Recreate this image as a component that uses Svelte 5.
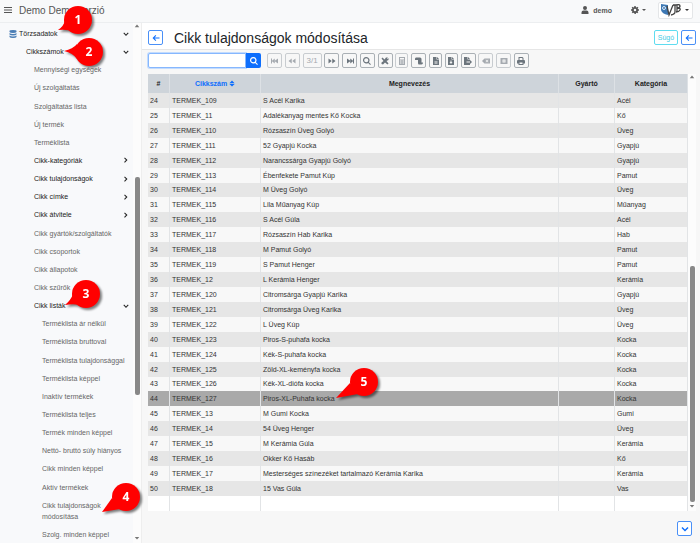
<script>
  const menu = [
    { t: 'Törzsadatok', lvl: 0, open: true },
    { t: 'Cikkszámok', lvl: 1, open: true },
    { t: 'Mennyiségi egységek', lvl: 2 },
    { t: 'Új szolgáltatás', lvl: 2 },
    { t: 'Szolgáltatás lista', lvl: 2 },
    { t: 'Új termék', lvl: 2 },
    { t: 'Terméklista', lvl: 2 },
    { t: 'Cikk-kategóriák', lvl: 2, open: false },
    { t: 'Cikk tulajdonságok', lvl: 2, open: false },
    { t: 'Cikk címke', lvl: 2, open: false },
    { t: 'Cikk átvitele', lvl: 2, open: false },
    { t: 'Cikk gyártók/szolgáltatók', lvl: 2 },
    { t: 'Cikk csoportok', lvl: 2 },
    { t: 'Cikk állapotok', lvl: 2 },
    { t: 'Cikk szűrők', lvl: 2 },
    { t: 'Cikk listák', lvl: 2, open: true },
    { t: 'Terméklista ár nélkül', lvl: 3 },
    { t: 'Terméklista bruttoval', lvl: 3 },
    { t: 'Terméklista tulajdonsággal', lvl: 3 },
    { t: 'Terméklista képpel', lvl: 3 },
    { t: 'Inaktív termékek', lvl: 3 },
    { t: 'Terméklista teljes', lvl: 3 },
    { t: 'Termék minden képpel', lvl: 3 },
    { t: 'Nettó- bruttó súly hiányos', lvl: 3 },
    { t: 'Cikk minden képpel', lvl: 3 },
    { t: 'Aktív termékek', lvl: 3 },
    { t: 'Cikk tulajdonságok módosítása', lvl: 3 },
    { t: 'Szolg. minden képpel', lvl: 3 },
  ]

  const rows = [
    [24, 'TERMEK_109', 'S Acél Karika', 'Acél'],
    [25, 'TERMEK_11', 'Adalékanyag mentes Kő Kocka', 'Kő'],
    [26, 'TERMEK_110', 'Rózsaszín Üveg Golyó', 'Üveg'],
    [27, 'TERMEK_111', '52 Gyapjú Kocka', 'Gyapjú'],
    [28, 'TERMEK_112', 'Narancssárga Gyapjú Golyó', 'Gyapjú'],
    [29, 'TERMEK_113', 'Ébenfekete Pamut Kúp', 'Pamut'],
    [30, 'TERMEK_114', 'M Üveg Golyó', 'Üveg'],
    [31, 'TERMEK_115', 'Lila Műanyag Kúp', 'Műanyag'],
    [32, 'TERMEK_116', 'S Acél Gúla', 'Acél'],
    [33, 'TERMEK_117', 'Rózsaszín Hab Karika', 'Hab'],
    [34, 'TERMEK_118', 'M Pamut Golyó', 'Pamut'],
    [35, 'TERMEK_119', 'S Pamut Henger', 'Pamut'],
    [36, 'TERMEK_12', 'L Kerámia Henger', 'Kerámia'],
    [37, 'TERMEK_120', 'Citromsárga Gyapjú Karika', 'Gyapjú'],
    [38, 'TERMEK_121', 'Citromsárga Üveg Karika', 'Üveg'],
    [39, 'TERMEK_122', 'L Üveg Kúp', 'Üveg'],
    [40, 'TERMEK_123', 'Piros-S-puhafa kocka', 'Kocka'],
    [41, 'TERMEK_124', 'Kék-S-puhafa kocka', 'Kocka'],
    [42, 'TERMEK_125', 'Zöld-XL-keményfa kocka', 'Kocka'],
    [43, 'TERMEK_126', 'Kék-XL-diófa kocka', 'Kocka'],
    [44, 'TERMEK_127', 'Piros-XL-Puhafa kocka', 'Kocka'],
    [45, 'TERMEK_13', 'M Gumi Kocka', 'Gumi'],
    [46, 'TERMEK_14', '54 Üveg Henger', 'Üveg'],
    [47, 'TERMEK_15', 'M Kerámia Gúla', 'Kerámia'],
    [48, 'TERMEK_16', 'Okker Kő Hasáb', 'Kő'],
    [49, 'TERMEK_17', 'Mesterséges színezéket tartalmazó Kerámia Karika', 'Kerámia'],
    [50, 'TERMEK_18', '15 Vas Gúla', 'Vas'],
  ]

  let selected = $state(44)
  let search = $state('')

  // 16x16 glyphs
  const I = {
    first: 'M0 3h2v4.500L7.500 3v4.500L14 3v10L7.500 8.500V13L2 8.500V13H0z',
    prev: 'M1 8l6.500-5v10zM8.500 8L15 3v10z',
    next: 'M15 8L8.500 3v10zM7.500 8L1 3v10z',
    last: 'M16 3h-2v4.500L8.500 3v4.500L2 3v10l6.500-4.500V13L14 8.500V13h2z',
    search: 'M6.500 0a6.500 6.500 0 1 0 3.800 11.800l4 4 1.500-1.500-4-4A6.500 6.500 0 0 0 6.500 0zm0 2.300a4.200 4.200 0 1 1 0 8.400 4.200 4.200 0 0 1 0-8.400z',
    tools: 'M1 3l2-2 4 4 3-4h4l-2 2 1 1 2-2v4l-4 2 4 5-2 2-5-4-4 4-3-1 0-3 4-3z',
    calc: 'M2 0h12v16H2zM4 2v3h8V2zM4 7v2h2V7zm3 0v2h2V7zm3 0v2h2V7zM4 11v2h2v-2zm3 0v2h2v-2zm3 0v2h2v-2z',
    scroll: 'M2 1h8q3 0 3 3v7h3q0 4-3 4H8q-2 0-2-3V6H0V4q0-3 2-3z',
    file: 'M2 0h7v5h5v11H2zM10 0l4 4h-4zM5 8v1h6V8zm0 3v2h6v-2z',
    fileDown: 'M2 0h7v5h5v11H2zM10 0l4 4h-4zM7 7v3H5l3 4 3-4H9V7z',
    exp: 'M0 0h7v5h5v4H5v2h7v5H0zM8 0l4 4H8zM12 6l4 4-4 4z',
    back: 'M5 3h11v10H5L0 8zM8 5L7 6l2 2-2 2 1 1 2-2 2 2 1-1-2-2 2-2-1-1-2 2z',
    box: 'M1 2h14v12H1zM5 5v6h6V5zM7 7h2v2H7z',
    print: 'M3 0h8l2 2v4h1q2 0 2 2v5h-3v3H3v-3H0V8q0-2 2-2h1zM5 2v4h6V3l-1-1zM5 11v3h6v-3z',
    left: 'M7 2l1.500 1.500L5 7h10v2H5l3.500 3.500L7 14 1 8z',
    down: 'M8 13L1 6l2-2 5 5 5-5 2 2z',
    right: 'M12 8l-7 7-2-2 5-5-5-5 2-2z',
    user: 'M8 0a4 4 0 1 1 0 8 4 4 0 0 1 0-8zM5 9h6q4 0 4 4v3H1v-3q0-4 4-4z',
    gear: 'M6.500 0h3v2l2 .8L13 1.500 14.800 3.500 13.300 5l.7 1.500h2v3h-2l-.7 1.700 1.300 1.500-2 2-1.500-1.400-1.300.7v2h-3v-2l-1.700-.7L3.500 14.700l-2-2L2.800 11 2 9.500H0v-3h2L2.800 5 1.300 3.500l2-2L5 2.800 6.500 2zM8 5.500a2.500 2.500 0 1 0 0 5 2.500 2.500 0 0 0 0-5z',
    db: 'M1 2q0-2 7-2t7 2v2q-1 2-7 2T1 4zM1 6q2 2 7 2t7-2v3q-1 2-7 2t-7-2zM1 11q2 2 7 2t7-2v3q-1 2-7 2t-7-2z',
    bars: 'M0 2h16v2H0zM0 7h16v2H0zM0 12h16v2H0z',
    sort: 'M8 0l7 7H1zM8 16L1 9h14z',
    caretDown: 'M2 5h12l-6 7z',
    caretUp: 'M2 11h12L8 4z',
  }

  const tools = [
    { icon: 'first', off: true, label: 'Első' },
    { icon: 'prev', off: true, label: 'Előző' },
    { text: '3/1', off: true, label: 'Oldal' },
    { icon: 'next', label: 'Következő' },
    { icon: 'last', label: 'Utolsó' },
    { icon: 'search', label: 'Keresés' },
    { icon: 'tools', label: 'Eszközök' },
    { icon: 'calc', off: true, slim: true, label: 'Számítás' },
    { icon: 'scroll', label: 'Napló' },
    { icon: 'file', slim: true, label: 'Fájl' },
    { icon: 'fileDown', slim: true, label: 'Letöltés' },
    { icon: 'exp', label: 'Export' },
    { icon: 'back', off: true, label: 'Törlés' },
    { icon: 'box', off: true, label: 'Ablak' },
    { icon: 'print', label: 'Nyomtatás' },
  ]

  // tails are drawn from the bubble centre
  const pins = [
    { n: 1, tail: 'M-20 10Q-14 6-13 0L-5 12Q-10 9-20 10z' },
    { n: 2, tail: 'M-25-1Q-16-3-12-8V7Q-16 1-25-1z' },
    { n: 3, tail: 'M-21 11Q-15 6-13 0L-4 12Q-10 9-21 11z' },
    { n: 4, tail: 'M-24 15L-14 1L-6 12z' },
    { n: 5, tail: 'M-28 16L-14 1L-6 12z' },
  ]
</script>

{#snippet icon(name)}
  <svg class="ico" viewBox="0 0 16 16" aria-hidden="true"><path fill-rule="evenodd" d={I[name]} /></svg>
{/snippet}

<div class="page">
  <header class="topbar">
    <button class="plain burger" aria-label="Menü">{@render icon('bars')}</button>
    <span class="brand">Demo Demo verzió</span>
    <button class="plain user">{@render icon('user')}<span>demo</span></button>
    <button class="plain settings" aria-label="Beállítások">{@render icon('gear')}<i class="caret"></i></button>
    <button class="logo" aria-label="VJB">
      <svg viewBox="0 0 22 14" aria-hidden="true">
        <path d="M1 1l7 1v10Q2 11 1 7z" fill="#3d78b4" />
        <circle cx="4" cy="5" r="1.500" fill="none" stroke="#dbe9f6" />
        <path d="M7 3l2 9 4-10M15 2v7q0 2-4 3M13 2h3M17 2v7M16 2q4-1 4 1 0 2-3 2 4 0 3 2-1 2-4 2" fill="none" stroke="#444" stroke-width="1.300" />
      </svg>
      <i class="caret"></i>
    </button>
  </header>

  <div class="body">
    <nav class="sidebar">
      <ul>
        {#each menu as m}
          <li class="lvl{m.lvl}" class:parent={m.open !== undefined}>
            {#if m.lvl === 0}<span class="db">{@render icon('db')}</span>{/if}
            <a href="#menu">{m.t}</a>
            {#if m.open !== undefined}
              <span class="chev">{@render icon(m.open ? 'down' : 'right')}</span>
            {/if}
          </li>
        {/each}
      </ul>
      <div class="scroll side">{@render icon('caretUp')}<b></b>{@render icon('caretDown')}</div>
    </nav>

    <main>
      <div class="head">
        <button class="sq" aria-label="Vissza">{@render icon('left')}</button>
        <h1>Cikk tulajdonságok módosítása</h1>
        <button class="help">Súgó</button>
        <button class="sq" aria-label="Vissza">{@render icon('left')}</button>
      </div>

      <div class="toolbar">
        <div class="find">
          <input type="text" aria-label="Keresés" bind:value={search} />
          <button aria-label="Keresés">{@render icon('search')}</button>
        </div>
        <div class="tools">
          {#each tools as b}
            <button class:off={b.off} class:slim={b.slim} class:wide={b.text} aria-label={b.label}>
              {#if b.text}{b.text}{:else}{@render icon(b.icon)}{/if}
            </button>
          {/each}
        </div>
      </div>

      <div class="grid">
        <table>
          <colgroup><col class="c1" /><col class="c2" /><col /><col class="c4" /><col class="c5" /></colgroup>
          <thead>
            <tr>
              <th>#</th>
              <th class="sorted">Cikkszám {@render icon('sort')}</th>
              <th>Megnevezés</th>
              <th>Gyártó</th>
              <th>Kategória</th>
            </tr>
          </thead>
          <tbody>
            {#each rows as [n, code, name, cat]}
              <tr class:sel={n === selected} onclick={() => (selected = n)}>
                <td>{n}</td><td>{code}</td><td>{name}</td><td></td><td>{cat}</td>
              </tr>
            {/each}
            <tr class="blank"><td></td><td></td><td></td><td></td><td></td></tr>
          </tbody>
        </table>
        <div class="scroll list">{@render icon('caretUp')}<b></b>{@render icon('caretDown')}</div>
      </div>

      <footer>
        <button class="sq" aria-label="Lenyitás">{@render icon('down')}</button>
      </footer>
    </main>
  </div>

  {#each pins as p}
    <svg class="pin pin{p.n}" viewBox="-32 -20 52 40" aria-hidden="true">
      <path d={p.tail} />
      <circle r="14" />
      <text y="4">{p.n}</text>
    </svg>
  {/each}
</div>

<style>
  :global(body) { background:#f7f7f7; }
  .page { position:relative; display:flex; flex-direction:column; min-height:100vh; font-family:"Liberation Sans", Arial, sans-serif; font-size:7px; color:#212529; }
  .page, .page * { box-sizing:border-box; }
  button { display:flex; align-items:center; justify-content:center; flex:none; padding:0; font:inherit; color:inherit; background:none; border:0; cursor:pointer; }
  .ico { display:block; flex:none; width:8px; height:8px; fill:currentColor; }

  .topbar { display:flex; align-items:center; height:23px; padding:0 7px 2px 4px; background:#f8f9fa; border-bottom:1px solid #eceef0; color:#555; }
  .brand { flex:1; margin-left:7px; font-size:10px; }
  .user { gap:4px; font-size:7px; font-weight:700; }
  .settings { gap:3px; margin:0 12px 0 19px; }
  .caret { border:2px solid transparent; border-top-color:currentColor; border-bottom:0; }
  .logo { gap:3px; height:17px; padding:0 3px 0 1px; background:#fff; border:1px solid #e4e6e8; border-radius:2px; color:#333; }
  .logo svg { width:22px; height:14px; }

  .body { display:flex; flex:1; }
  .sidebar { display:flex; flex:none; width:142px; background:#f8f9fb; border-right:1px solid #eee; }
  ul { display:flex; flex:1; flex-direction:column; justify-content:space-between; margin:0; padding:5px 4px 3px 0; list-style:none; }
  li { display:flex; align-items:center; line-height:11px; color:#666; }
  li a { flex:1; color:inherit; text-decoration:none; }
  .parent { color:#222; }
  .lvl0 { padding-left:9px; }
  .lvl1 { padding-left:26px; }
  .lvl2 { padding-left:34px; }
  .lvl3 { padding-left:42px; }
  .db { margin-right:2px; color:#4a7db5; }
  .chev .ico { width:6px; height:6px; }

  .scroll { display:grid; flex:none; width:8px; justify-items:center; background:#fcfcfc; color:#777; }
  .scroll .ico { width:6px; height:6px; }
  .scroll b { width:5px; background:#888; border-radius:2px; }
  .side { grid-template-rows:8px 146fr 218fr 140fr 8px; }
  .list { grid-template-rows:8px 184fr 235fr 1fr 8px; }
  .scroll b { grid-row:3; }
  .scroll .ico:last-child { grid-row:5; }

  main { display:flex; flex:1; flex-direction:column; min-width:0; }
  .head { display:flex; align-items:center; gap:3px; height:27px; padding:3px 4px 0 6px; background:#fff; border-bottom:1px solid #e6e6e6; }
  h1 { flex:1; margin:0 0 0 8px; font-size:14px; line-height:18px; font-weight:400; }
  .sq { width:15px; height:15px; border:1px solid #4a90f7; border-radius:2px; background:#fff; color:#0d6efd; }
  .help { width:24px; height:15px; border:1px solid #5fdcf0; border-radius:2px; color:#3fcbe4; }

  .toolbar { display:flex; gap:6px; padding:3px 6px 6px; }
  .find { display:flex; }
  .find input { width:98px; height:15px; padding:0 3px; font-size:7px; border:1px solid #86b7fe; border-radius:2px 0 0 2px; outline:0; box-shadow:0 0 0 1px #c2dbfe; background:#fff; }
  .find button { width:15px; height:15px; border-radius:0 2px 2px 0; background:#0d6efd; color:#fff; }
  .tools { display:flex; justify-content:space-between; width:262px; }
  .tools button { width:15px; height:15px; border:1px solid #aab0b5; border-radius:2px; color:#6c757d; }
  .tools .slim { width:13px; }
  .tools .wide { width:19px; font-size:8px; }
  .tools .off { border-color:#c8ccd0; color:#a5aab0; }

  .grid { display:flex; flex:1; padding:0 4px 0 6px; }
  table { flex:1; border-collapse:separate; border-spacing:0; table-layout:fixed; background:#f8f8f8; color:#333; }
  .c1 { width:22px; }
  .c2 { width:91px; }
  .c4 { width:56px; }
  .c5 { width:73px; }
  th { height:19px; padding:0; background:#ced4da; border-right:1px solid #dde1e5; font-size:7px; color:#222; }
  .sorted { color:#0d6efd; }
  .sorted .ico { display:inline-block; width:6px; height:7px; vertical-align:-1px; }
  td { padding:0 2px; line-height:13px; border-right:1px solid #e2e4e6; white-space:nowrap; }
  tbody tr:nth-child(odd) td { background:#e6e6e6; }
  tbody tr.sel td { background:#a9a9a9; }
  tbody tr.blank td { height:15px; background:#fff; }

  footer { display:flex; justify-content:flex-end; padding:10px 8px 7px; }

  .pin { position:absolute; width:52px; height:40px; overflow:visible; pointer-events:none; filter:drop-shadow(2px 2px 1px rgba(0,0,0,.5)); }
  .pin path, .pin circle { fill:#f00; }
  .pin text { fill:#fff; font:700 12px "Open Sans", sans-serif; text-anchor:middle; }
  .pin1 { left:46px; top:0; }
  .pin2 { left:57px; top:32px; }
  .pin3 { left:54px; top:274px; }
  .pin4 { left:94px; top:477px; }
  .pin5 { left:332px; top:362px; }
</style>
